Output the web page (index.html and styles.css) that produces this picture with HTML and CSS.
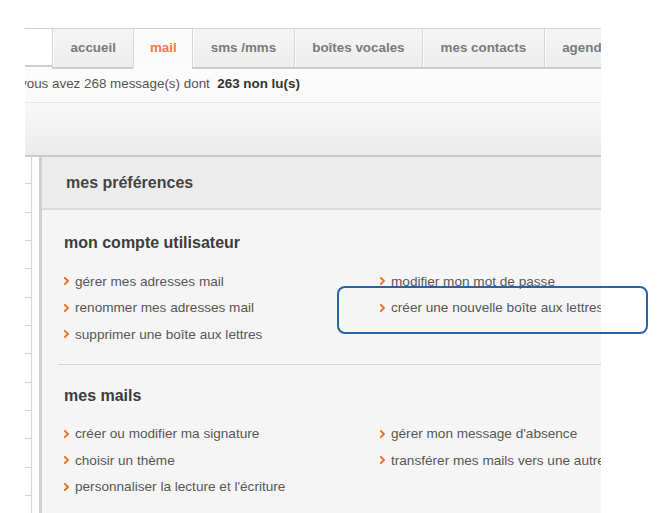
FILE: index.html
```html
<!DOCTYPE html>
<html lang="fr">
<head>
<meta charset="utf-8">
<title>mes préférences</title>
<link rel="stylesheet" href="styles.css">
</head>
<body>
<div class="page">
  <div class="frame">
    <nav class="tabs">
      <span class="tab blank"></span>
      <a class="tab">accueil</a>
      <a class="tab active">mail</a>
      <a class="tab">sms /mms</a>
      <a class="tab">boîtes vocales</a>
      <a class="tab">mes contacts</a>
      <a class="tab">agenda</a>
    </nav>
    <div class="status"><span class="status-text">vous avez 268 message(s) dont&nbsp; <b>263 non lu(s)</b></span></div>
    <div class="toolbar"></div>
    <div class="main">
      <ul class="folders">
        <li></li><li></li><li></li><li></li><li></li><li></li><li></li><li></li><li></li><li></li><li></li><li></li><li></li>
      </ul>
      <div class="gap"></div>
      <section class="panel">
        <h1 class="panel-title">mes préférences</h1>
        <div class="panel-body">
          <div class="group">
            <h2 class="group-title">mon compte utilisateur</h2>
            <ul class="links">
              <li><svg class="chev" viewBox="0 0 5 8" width="5" height="8"><polyline points="0.8,0.8 4,4 0.8,7.2"/></svg>gérer mes adresses mail</li>
              <li><svg class="chev" viewBox="0 0 5 8" width="5" height="8"><polyline points="0.8,0.8 4,4 0.8,7.2"/></svg>modifier mon mot de passe</li>
              <li><svg class="chev" viewBox="0 0 5 8" width="5" height="8"><polyline points="0.8,0.8 4,4 0.8,7.2"/></svg>renommer mes adresses mail</li>
              <li><svg class="chev" viewBox="0 0 5 8" width="5" height="8"><polyline points="0.8,0.8 4,4 0.8,7.2"/></svg>créer une nouvelle boîte aux lettres</li>
              <li><svg class="chev" viewBox="0 0 5 8" width="5" height="8"><polyline points="0.8,0.8 4,4 0.8,7.2"/></svg>supprimer une boîte aux lettres</li>
            </ul>
          </div>
          <div class="group">
            <h2 class="group-title">mes mails</h2>
            <ul class="links">
              <li><svg class="chev" viewBox="0 0 5 8" width="5" height="8"><polyline points="0.8,0.8 4,4 0.8,7.2"/></svg>créer ou modifier ma signature</li>
              <li><svg class="chev" viewBox="0 0 5 8" width="5" height="8"><polyline points="0.8,0.8 4,4 0.8,7.2"/></svg>gérer mon message d'absence</li>
              <li><svg class="chev" viewBox="0 0 5 8" width="5" height="8"><polyline points="0.8,0.8 4,4 0.8,7.2"/></svg>choisir un thème</li>
              <li><svg class="chev" viewBox="0 0 5 8" width="5" height="8"><polyline points="0.8,0.8 4,4 0.8,7.2"/></svg>transférer mes mails vers une autre adresse</li>
              <li><svg class="chev" viewBox="0 0 5 8" width="5" height="8"><polyline points="0.8,0.8 4,4 0.8,7.2"/></svg>personnaliser la lecture et l'écriture</li>
            </ul>
          </div>
        </div>
      </section>
    </div>
  </div>
  <div class="highlight"></div>
</div>
</body>
</html>
```

FILE: styles.css
```css
html, body {
  margin: 0;
  padding: 0;
  background: #ffffff;
  overflow: hidden;
}
body {
  height: 513px;
  font-family: "Liberation Sans", Arial, sans-serif;
}
.page {
  position: relative;
  height: 513px;
  padding-top: 28px;
  box-sizing: border-box;
}
.frame {
  width: 576px;
  margin-left: 25px;
  height: 485px;
  overflow: hidden;
  display: flex;
  flex-direction: column;
}

/* tabs */
.tabs {
  display: flex;
  border-top: 1px solid #cfcfcf;
  flex: none;
}
.tab {
  flex: none;
  height: 38px;
  line-height: 37px;
  padding: 0 17.5px;
  border-left: 1px solid #d6d6d6;
  border-bottom: 2px solid #cdcdcd;
  background: linear-gradient(#f5f5f5, #ededed);
  color: #7a7a7a;
  font-weight: bold;
  font-size: 13.4px;
  white-space: nowrap;
  box-shadow: inset 1px 0 0 #fbfbfb;
}
.tab.blank {
  width: 27px;
  padding: 0;
  border-left: none;
  background: #ffffff;
  box-shadow: none;
  box-sizing: border-box;
}
.tab.active {
  color: #f07a45;
  background: #fbfbfb;
  border-bottom-color: #fbfbfb;
  padding: 0 15.5px;
}

/* status */
.status {
  flex: none;
  height: 33px;
  background: linear-gradient(#fcfcfc, #f9f9f9);
  border-bottom: 1px solid #e6e6e6;
  overflow: hidden;
}
.status-text {
  display: block;
  margin-left: -5px;
  line-height: 30px;
  font-size: 13.4px;
  color: #555555;
  white-space: nowrap;
}
.status-text b {
  color: #333333;
}

/* toolbar */
.toolbar {
  flex: none;
  height: 52px;
  background: linear-gradient(#f8f8f8, #ebebeb);
  border-bottom: 2px solid #c9c9c9;
}

/* main */
.main {
  flex: 1;
  display: flex;
  min-height: 0;
}
.folders {
  flex: none;
  width: 6px;
  margin: -1px 0 0 0;
  padding: 0;
  list-style: none;
  border-right: 1px solid #d6d6d6;
  overflow: hidden;
}
.folders li {
  height: 27.33px;
  border-bottom: 1px solid #d3d3d3;
}
.gap {
  flex: none;
  width: 7px;
  background: #ffffff;
}
.panel {
  flex: 1;
  min-width: 0;
  border-left: 3px solid #d0d0d0;
  background: #f5f5f5;
}
.panel-title {
  margin: 0;
  height: 51px;
  line-height: 51px;
  padding-left: 24px;
  background: #ececec;
  border-bottom: 2px solid #dadada;
  font-size: 16px;
  font-weight: bold;
  color: #444444;
}
.panel-body {
  padding-left: 16px;
}
.group {
  padding: 23px 0 16px 6px;
  border-bottom: 1px solid #d4d4d4;
}
.group + .group {
  padding-top: 21px;
}
.group-title {
  margin: 0 0 15px 0;
  line-height: 20px;
  font-size: 16px;
  font-weight: bold;
  color: #3c3c3c;
}
.links {
  margin: 0;
  padding: 0;
  list-style: none;
  display: grid;
  grid-template-columns: 316px 1fr;
  grid-auto-rows: 26.5px;
}
.links li {
  display: flex;
  align-items: center;
  white-space: nowrap;
  font-size: 13.6px;
  color: #575757;
  min-width: 0;
}
.chev {
  flex: none;
  margin-right: 6px;
  fill: none;
  stroke: #f07020;
  stroke-width: 1.9;
  stroke-linecap: round;
  stroke-linejoin: round;
}

/* annotation */
.highlight {
  position: absolute;
  left: 337px;
  top: 286px;
  width: 311px;
  height: 48px;
  box-sizing: border-box;
  border: 2px solid #2862ab;
  border-radius: 8px;
}
```
